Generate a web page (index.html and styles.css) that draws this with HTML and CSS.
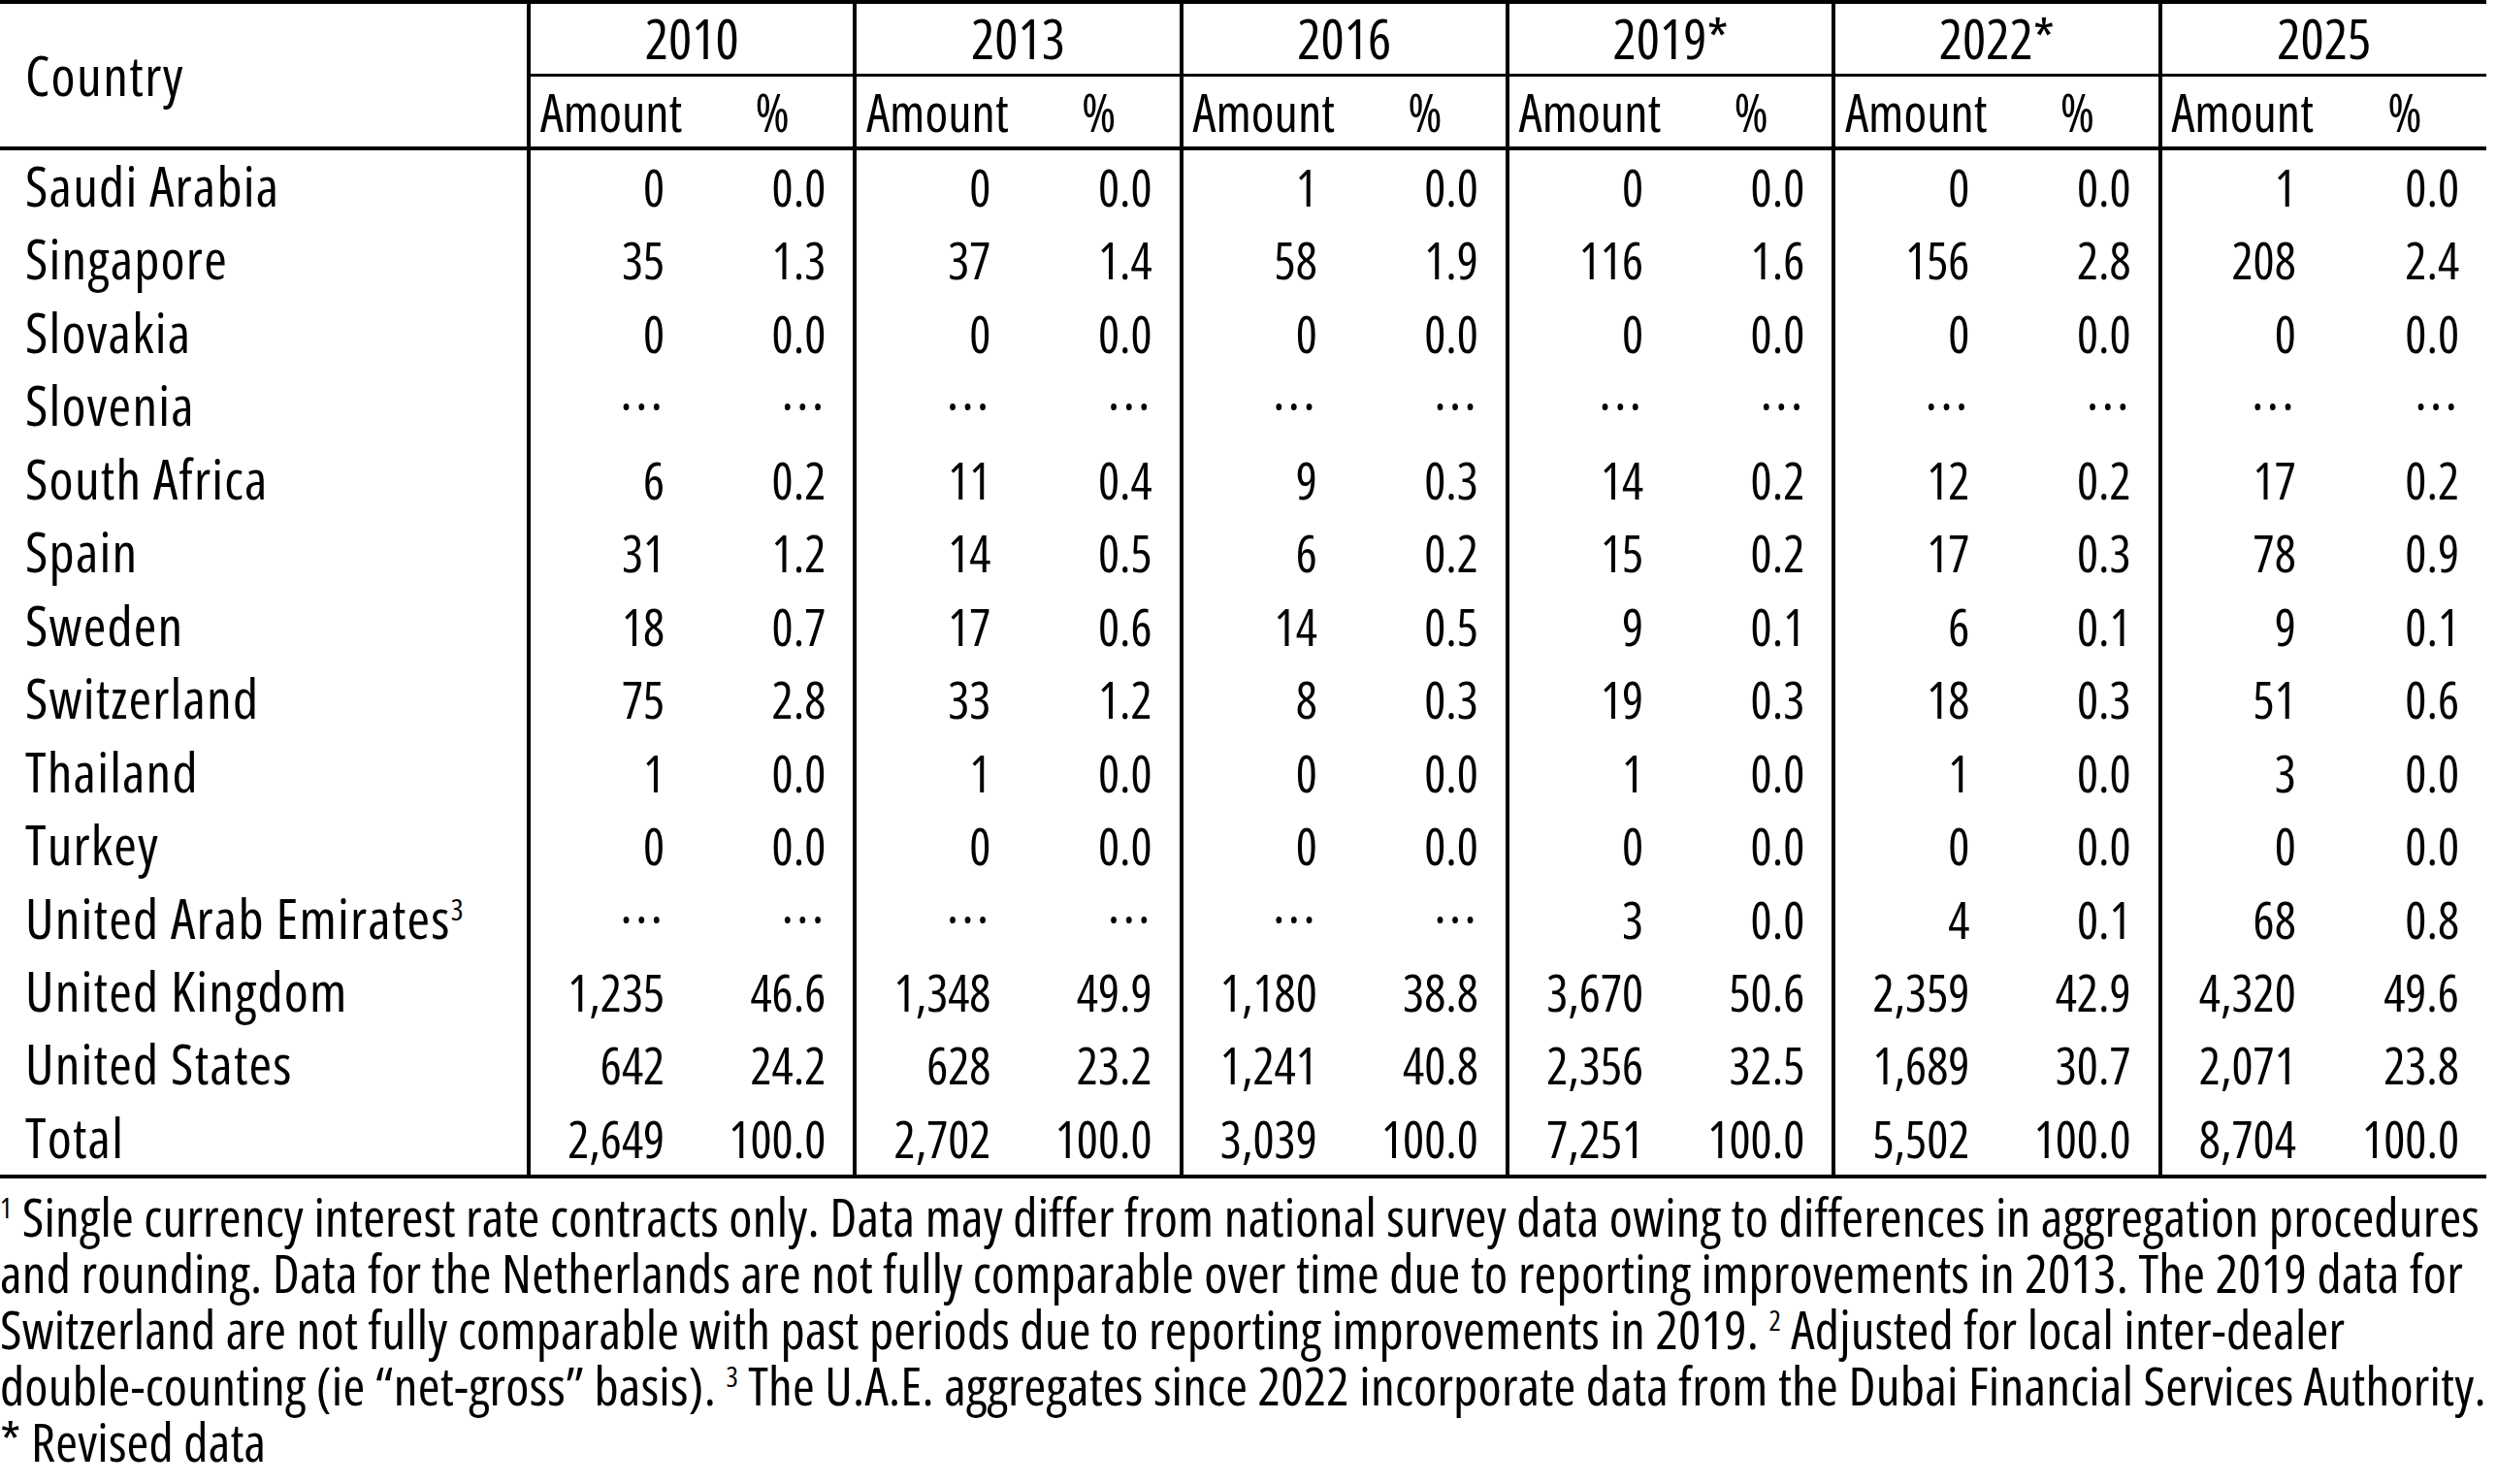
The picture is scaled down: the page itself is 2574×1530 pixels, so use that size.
FILE: index.html
```html
<!DOCTYPE html>
<html lang="en">
<head>
<meta charset="utf-8">
<title>Interest rate derivatives turnover by country</title>
<link rel="stylesheet" href="styles.css">
</head>
<body>
<main class="page">
<table class="data">
  <colgroup>
    <col class="c-country">
    <col class="c-n"><col class="c-n"><col class="c-n"><col class="c-n"><col class="c-n"><col class="c-n">
    <col class="c-n"><col class="c-n"><col class="c-n"><col class="c-n"><col class="c-n"><col class="c-n">
  </colgroup>
  <thead>
    <tr class="years">
      <th class="country-h" rowspan="2">Country</th>
      <th class="yr" colspan="2">2010</th>
      <th class="yr" colspan="2">2013</th>
      <th class="yr" colspan="2">2016</th>
      <th class="yr" colspan="2">2019*</th>
      <th class="yr" colspan="2">2022*</th>
      <th class="yr" colspan="2">2025</th>
    </tr>
    <tr class="sub">
      <th class="g">Amount</th><th>%</th>
      <th class="g">Amount</th><th>%</th>
      <th class="g">Amount</th><th>%</th>
      <th class="g">Amount</th><th>%</th>
      <th class="g">Amount</th><th>%</th>
      <th class="g">Amount</th><th>%</th>
    </tr>
  </thead>
  <tbody>
    <tr><th class="name">Saudi Arabia</th>
      <td class="g">0</td><td>0.0</td><td class="g">0</td><td>0.0</td><td class="g">1</td><td>0.0</td>
      <td class="g">0</td><td>0.0</td><td class="g">0</td><td>0.0</td><td class="g">1</td><td>0.0</td></tr>
    <tr><th class="name">Singapore</th>
      <td class="g">35</td><td>1.3</td><td class="g">37</td><td>1.4</td><td class="g">58</td><td>1.9</td>
      <td class="g">116</td><td>1.6</td><td class="g">156</td><td>2.8</td><td class="g">208</td><td>2.4</td></tr>
    <tr><th class="name">Slovakia</th>
      <td class="g">0</td><td>0.0</td><td class="g">0</td><td>0.0</td><td class="g">0</td><td>0.0</td>
      <td class="g">0</td><td>0.0</td><td class="g">0</td><td>0.0</td><td class="g">0</td><td>0.0</td></tr>
    <tr><th class="name">Slovenia</th>
      <td class="g ell">···</td><td class="ell">···</td><td class="g ell">···</td><td class="ell">···</td><td class="g ell">···</td><td class="ell">···</td>
      <td class="g ell">···</td><td class="ell">···</td><td class="g ell">···</td><td class="ell">···</td><td class="g ell">···</td><td class="ell">···</td></tr>
    <tr><th class="name">South Africa</th>
      <td class="g">6</td><td>0.2</td><td class="g">11</td><td>0.4</td><td class="g">9</td><td>0.3</td>
      <td class="g">14</td><td>0.2</td><td class="g">12</td><td>0.2</td><td class="g">17</td><td>0.2</td></tr>
    <tr><th class="name">Spain</th>
      <td class="g">31</td><td>1.2</td><td class="g">14</td><td>0.5</td><td class="g">6</td><td>0.2</td>
      <td class="g">15</td><td>0.2</td><td class="g">17</td><td>0.3</td><td class="g">78</td><td>0.9</td></tr>
    <tr><th class="name">Sweden</th>
      <td class="g">18</td><td>0.7</td><td class="g">17</td><td>0.6</td><td class="g">14</td><td>0.5</td>
      <td class="g">9</td><td>0.1</td><td class="g">6</td><td>0.1</td><td class="g">9</td><td>0.1</td></tr>
    <tr><th class="name">Switzerland</th>
      <td class="g">75</td><td>2.8</td><td class="g">33</td><td>1.2</td><td class="g">8</td><td>0.3</td>
      <td class="g">19</td><td>0.3</td><td class="g">18</td><td>0.3</td><td class="g">51</td><td>0.6</td></tr>
    <tr><th class="name">Thailand</th>
      <td class="g">1</td><td>0.0</td><td class="g">1</td><td>0.0</td><td class="g">0</td><td>0.0</td>
      <td class="g">1</td><td>0.0</td><td class="g">1</td><td>0.0</td><td class="g">3</td><td>0.0</td></tr>
    <tr><th class="name">Turkey</th>
      <td class="g">0</td><td>0.0</td><td class="g">0</td><td>0.0</td><td class="g">0</td><td>0.0</td>
      <td class="g">0</td><td>0.0</td><td class="g">0</td><td>0.0</td><td class="g">0</td><td>0.0</td></tr>
    <tr><th class="name">United Arab Emirates<sup class="fn">3</sup></th>
      <td class="g ell">···</td><td class="ell">···</td><td class="g ell">···</td><td class="ell">···</td><td class="g ell">···</td><td class="ell">···</td>
      <td class="g">3</td><td>0.0</td><td class="g">4</td><td>0.1</td><td class="g">68</td><td>0.8</td></tr>
    <tr><th class="name">United Kingdom</th>
      <td class="g">1,235</td><td>46.6</td><td class="g">1,348</td><td>49.9</td><td class="g">1,180</td><td>38.8</td>
      <td class="g">3,670</td><td>50.6</td><td class="g">2,359</td><td>42.9</td><td class="g">4,320</td><td>49.6</td></tr>
    <tr><th class="name">United States</th>
      <td class="g">642</td><td>24.2</td><td class="g">628</td><td>23.2</td><td class="g">1,241</td><td>40.8</td>
      <td class="g">2,356</td><td>32.5</td><td class="g">1,689</td><td>30.7</td><td class="g">2,071</td><td>23.8</td></tr>
    <tr class="total"><th class="name">Total</th>
      <td class="g">2,649</td><td>100.0</td><td class="g">2,702</td><td>100.0</td><td class="g">3,039</td><td>100.0</td>
      <td class="g">7,251</td><td>100.0</td><td class="g">5,502</td><td>100.0</td><td class="g">8,704</td><td>100.0</td></tr>
  </tbody>
</table>
<p class="notes"><sup class="fn">1</sup> Single currency interest rate contracts only. Data may differ from national survey data owing to differences in aggregation procedures<br>and rounding. Data for the Netherlands are not fully comparable over time due to reporting improvements in 2013. The 2019 data for<br>Switzerland are not fully comparable with past periods due to reporting improvements in 2019. <sup class="fn">2</sup> Adjusted for local inter-dealer<br>double-counting (ie “net-gross” basis). <sup class="fn">3</sup> The U.A.E. aggregates since 2022 incorporate data from the Dubai Financial Services Authority.<br>* Revised data</p>
</main>
</body>
</html>
```

FILE: styles.css
```css
html, body {
  margin: 0;
  padding: 0;
  background: #fff;
}

.page {
  width: 2563px;
  font-family: "Open Sans", "Noto Sans", "Liberation Sans", sans-serif;
  font-stretch: 75%;
  font-size: 57px;
  color: #000;
}

.data {
  width: 2563px;
  table-layout: fixed;
  border-collapse: collapse;
  border-spacing: 0;
  border-top: 4px solid #000;
  border-bottom: 4px solid #000;
}

.c-country { width: 545px; }
.c-n { width: 168.17px; }

.data th,
.data td {
  padding: 0;
  font-weight: 400;
  vertical-align: top;
  white-space: nowrap;
}

.years th { height: 72px; line-height: 71px; }

.sub th {
  height: 71px;
  line-height: 72px;
  font-size: 54px;
  text-align: center;
  vertical-align: baseline;
  border-bottom: 4px solid #000;
}

.country-h {
  text-align: left;
  vertical-align: middle !important;
  padding-left: 26px !important;
  letter-spacing: 1.4px;
  border-right: 4px solid #000;
  border-bottom: 4px solid #000;
}

.yr {
  text-align: center;
  border-left: 4px solid #000;
  border-bottom: 3px solid #000;
}

.g { border-left: 4px solid #000; }

.data tbody tr { height: 75.46px; }

.data tbody th,
.data tbody td {
  height: 75.46px;
  line-height: 72px;
  vertical-align: baseline;
}

.data tbody th.name {
  text-align: left;
  padding-left: 26px;
  letter-spacing: 1.2px;
  border-right: 4px solid #000;
}

.data tbody td {
  font-size: 52px;
  text-align: right;
  padding-right: 28px;
}

.data tbody tr.total th,
.data tbody tr.total td {
  border-bottom: 4px solid #000;
}

.data tbody td.ell {
  font-size: 57px;
  letter-spacing: 3px;
  padding-right: 27px;
}

sup.fn {
  font-size: 30px;
  line-height: 0;
  letter-spacing: 0;
  vertical-align: 19px;
}

.notes {
  margin: 0;
  padding-top: 10px;
  font-size: 55px;
  line-height: 58px;
  letter-spacing: 0.2px;
  white-space: nowrap;
}

.notes sup.fn {
  font-size: 29px;
}
```
